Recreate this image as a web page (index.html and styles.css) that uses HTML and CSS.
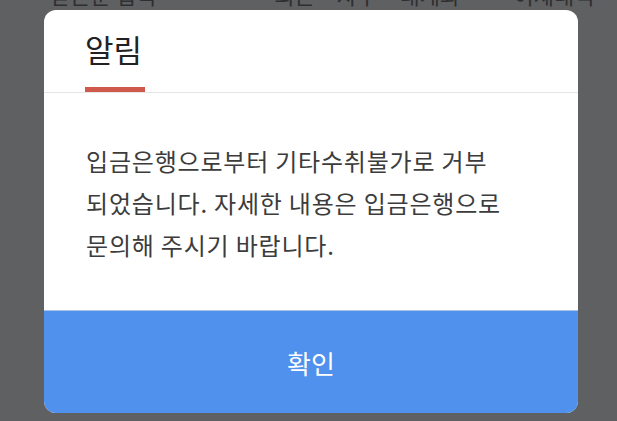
FILE: index.html
```html
<!DOCTYPE html>
<html>
<head>
	<meta charset="utf-8">
	<title>알림</title>
	<link rel="stylesheet" href="styles.css">
</head>
<body>
	<div class="backdrop">
		<div class="pageTabs">
			<span class="tabLeft">받는분 입력</span>
			<span class="tabMid">최근 · 자주 · 내계좌</span>
			<span class="tabRight">· 이체내역</span>
		</div>
	</div>
	<div class="dialog">
		<div class="dialogHead">
			<h1 class="dialogTitle">알림</h1>
			<span class="titleBar"></span>
		</div>
		<div class="dialogBody">
			<p>입금은행으로부터 기타수취불가로 거부<br>되었습니다. 자세한 내용은 입금은행으로<br>문의해 주시기 바랍니다.</p>
		</div>
		<div class="dialogBtn">확인</div>
	</div>
</body>
</html>
```

FILE: styles.css
```css
*{
	padding:0;
	margin:0;
	box-sizing: border-box;
}
body{
	width:617px;
	height:421px;
	overflow: hidden;
	background-color: #5f6062;
	font-family: "Noto Sans CJK KR", "Noto Sans", sans-serif;
}

.backdrop{
	height:10px;
	overflow: hidden;
}
.pageTabs{
	display: flex;
	margin-top:-17px;
	padding-left:50px;
	font-size:22px;
	line-height:22px;
	color:#2e2f30;
	white-space: nowrap;
}
.tabMid{
	margin-left:118px;
}
.tabRight{
	margin-left:36px;
}

.dialog{
	width:534px;
	margin-left:44px;
	background-color: #fff;
	border-radius: 12px;
	overflow: hidden;
}

.dialogHead{
	display: flex;
	flex-direction: column;
	align-items: flex-start;
	padding:19px 41px 0;
	border-bottom:1px solid #e6e6e6;
}
.dialogTitle{
	font-size:31px;
	line-height:40px;
	font-weight:400;
	color:#222;
}
.titleBar{
	width:60px;
	height:5px;
	margin-top:18px;
	background-color: #cf5a4c;
}

.dialogBody{
	height:217px;
	padding:47px 10px 0 42px;
}
.dialogBody p{
	font-size:24px;
	line-height:42px;
	letter-spacing:0.8px;
	color:#3c3c3c;
}

.dialogBtn{
	height:103px;
	display: flex;
	align-items: center;
	justify-content: center;
	background-color: #4f91ec;
	border-top:1px solid #a9c3e6;
	color:#fff;
	font-size:26px;
	cursor: pointer;
}
```
